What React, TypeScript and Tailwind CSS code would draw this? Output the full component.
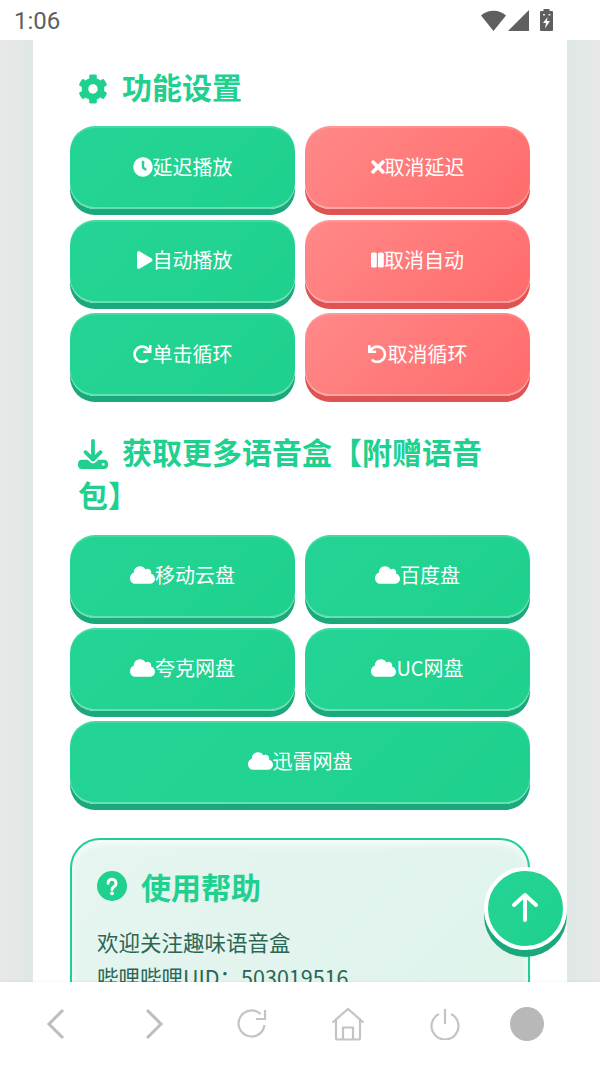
import React from "react";
import { FaCog, FaClock, FaTimes, FaPlay, FaRedo, FaUndo, FaCloud } from "react-icons/fa";
import { FaDownload } from "react-icons/fa6";

const cjk = { fontFamily: '"Noto Sans CJK SC", "Noto Sans", sans-serif' };

function Btn({ icon, label, red, wide }: { icon: React.ReactNode; label: string; red?: boolean; wide?: boolean }) {
  return (
    <button
      className={
        "h-[83px] rounded-[25px] flex items-center justify-center text-white text-[20px] leading-none pb-[1.5px] " +
        (wide ? "col-span-2 " : "") +
        (red
          ? "bg-[linear-gradient(135deg,#ff8989,#ff6b6b)] shadow-[0_6px_0_#e05353,inset_0_-2px_0_rgba(255,255,255,0.3),inset_0_2px_0_rgba(255,255,255,0.15)]"
          : "bg-[linear-gradient(135deg,#24d495,#1fd18d)] shadow-[0_6px_0_#1ba87c,inset_0_-2px_0_rgba(255,255,255,0.3),inset_0_2px_0_rgba(255,255,255,0.15)]")
      }
    >
      <span className="shrink-0 flex justify-end">{icon}</span>
      <span>{label}</span>
    </button>
  );
}

function StatusIcons() {
  return (
    <div className="flex items-center mr-[47px]">
      <svg width="25" height="21" viewBox="0 0 25 21" className="mr-[2px]"><path d="M0 5.5 C6.5 -0.8 18.5 -0.8 25 5.5 L12.5 21 Z" fill="#5f5f5f" /></svg>
      <svg width="21" height="21" viewBox="0 0 21 21" className="mr-[11px]"><path d="M0 21 L21 0 V21 Z" fill="#5f5f5f" /></svg>
      <svg width="13" height="22" viewBox="0 0 13 22">
        <path d="M3.5 0 H9.5 V2 H12 Q13 2 13 3 V21 Q13 22 12 22 H1 Q0 22 0 21 V3 Q0 2 1 2 H3.5 Z" fill="#5f5f5f" />
        <path d="M7.5 8 L3 14 H6 L5 19.5 L10 12 H7 Z" fill="#fff" />
        <path d="M3 5 h2 v1.5 h-2 z M8.5 5 h2 v1.5 h-2 z" fill="#e5e5e5" />
      </svg>
    </div>
  );
}

function BottomBar() {
  const s = { fill: "none", stroke: "#bdbdbd", strokeWidth: 3 };
  const t = { fill: "none", stroke: "#c4c4c4", strokeWidth: 2.2 };
  return (
    <div className="h-[84px] shrink-0 bg-white shadow-[0_-1px_2px_rgba(0,0,0,0.04)] relative z-20 flex items-center pl-[46px]">
      <svg width="20" height="32" viewBox="0 0 20 32" className="mr-[78px]"><path d="M17 2 L3 16 L17 30" {...s} /></svg>
      <svg width="20" height="32" viewBox="0 0 20 32" className="mr-[72px]"><path d="M3 2 L17 16 L3 30" {...s} /></svg>
      <svg width="32" height="32" viewBox="0 0 32 32" className="mr-[63px]">
        <path d="M28.5 17 A13 13 0 1 1 24.5 6" {...t} />
        <path d="M29 2 V11 H20" {...t} />
      </svg>
      <svg width="34" height="34" viewBox="0 0 34 34" className="mr-[65px]">
        <path d="M1.5 15.5 L17 2 L32.5 15.5" {...t} />
        <path d="M5 13 V31 Q5 32.5 6.5 32.5 H27.5 Q29 32.5 29 31 V13" {...t} />
        <path d="M12 32 V20.5 H22 V32" {...t} />
      </svg>
      <svg width="30" height="32" viewBox="0 0 30 32" className="mr-[50px]">
        <path d="M9 6 A13.5 13.5 0 1 0 21 6" {...t} />
        <path d="M15 1 V16" {...t} />
      </svg>
      <div className="w-[34px] h-[34px] rounded-full bg-[#b8b8b8] blur-[0.7px]" />
    </div>
  );
}

const cloud = <FaCloud className="w-[25px] h-[20px]" />;

export default function App() {
  const heading = "text-[30px] leading-[43px] font-bold text-[#20d08f]";
  return (
    <div className="w-[600px] h-[1066px] flex flex-col overflow-hidden bg-white relative" style={cjk}>
      <div className="h-[40px] shrink-0 bg-white flex items-center justify-between pl-[14px]">
        <span className="text-[24px] text-[#5f5f5f] leading-none mt-[1px]" style={{ fontFamily: "Roboto, sans-serif" }}>1:06</span>
        <StatusIcons />
      </div>

      <div className="flex-1 overflow-hidden bg-[linear-gradient(90deg,#e8e8e8_0,#dfe8e5_33px,#dfe8e5_567px,#e8e8e8_600px)] relative">
        <div className="mx-[33px] bg-white px-[37px] pt-[25px] h-[1000px]">
          <h2 className={heading + " pl-[8px]"}>
            <FaCog className="inline-block w-[30px] h-[30px] mr-[14px] align-[-5px]" />功能设置
          </h2>
          <div className="grid grid-cols-2 gap-x-[10px] gap-y-[10.5px] mt-[18px]">
            <Btn icon={<FaClock size={20} />} label="延迟播放" />
            <Btn red icon={<FaTimes className="w-[14px] h-[20px]" />} label="取消延迟" />
            <Btn icon={<span className="w-[20px] flex justify-end"><FaPlay className="w-[15.5px] h-[18px]" /></span>} label="自动播放" />
            <Btn
              red
              icon={
                <svg width="13" height="16" viewBox="0 0 13 16" fill="#fff">
                  <rect x="0" y="0.5" width="5.8" height="15" rx="1.6" />
                  <rect x="7" y="0.5" width="5.8" height="15" rx="1.6" />
                </svg>
              }
              label="取消自动"
            />
            <Btn icon={<span className="w-[20px] flex justify-center"><FaRedo size={18.5} /></span>} label="单击循环" />
            <Btn red icon={<span className="w-[20px] flex justify-center"><FaUndo size={18.5} /></span>} label="取消循环" />
          </div>

          <h2 className={heading + " pl-[8px] mt-[33.5px]"}>
            <span className="whitespace-nowrap">
              <FaDownload className="inline-block w-[30px] h-[30px] mr-[14px] align-[-5px]" />获取更多语音盒【附赠语音
            </span>
            <br />
            包】
          </h2>
          <div className="grid grid-cols-2 gap-x-[10px] gap-y-[10px] mt-[19px]">
            <Btn icon={cloud} label="移动云盘" />
            <Btn icon={cloud} label="百度盘" />
            <Btn icon={cloud} label="夸克网盘" />
            <Btn icon={cloud} label="UC网盘" />
            <Btn wide icon={cloud} label="迅雷网盘" />
          </div>

          <div className="mt-[34px] rounded-[30px] border-2 border-[#20d08f] bg-[linear-gradient(135deg,#e6f5f0,#ddf3ea)] shadow-[inset_0_4px_8px_rgba(255,255,255,0.8)] px-[25px] pt-[25px] pb-[20px] h-[300px]">
            <h3 className="text-[30px] leading-[43px] font-bold text-[#20d08f] flex items-center">
              <svg width="30" height="30" viewBox="0 0 30 30" className="mr-[14px] shrink-0">
                <circle cx="15" cy="15" r="15" fill="#20d08f" />
                <path d="M11 12.2 A4 4 0 1 1 17.4 15.4 C15.8 16.3 15 17 15 18.6" fill="none" stroke="#fff" strokeWidth="3" strokeLinecap="round" />
                <circle cx="15" cy="22.3" r="1.9" fill="#fff" />
              </svg>
              使用帮助
            </h3>
            <p className="text-[21.5px] leading-[33px] text-[#2b6655] mt-[17.5px]">欢迎关注趣味语音盒</p>
            <p className="text-[21.5px] leading-[33px] text-[#2b6655] mt-[1.5px]">哔哩哔哩UID：503019516</p>
          </div>
        </div>

        <div className="absolute left-[483.5px] top-[826.5px] w-[83px] h-[83px] rounded-full border-[4px] border-white bg-[linear-gradient(135deg,#24d495,#1fd18d)] shadow-[0_7px_0_#1ba87c] flex items-center justify-center text-white">
          <svg width="26" height="30" viewBox="0 0 26 30" fill="none" stroke="#fff" strokeWidth="4" strokeLinecap="round" strokeLinejoin="round" className="mt-[-2px]">
            <path d="M13 28 V3 M2 13 L13 3 L24 13" />
          </svg>
        </div>
      </div>

      <BottomBar />
    </div>
  );
}
